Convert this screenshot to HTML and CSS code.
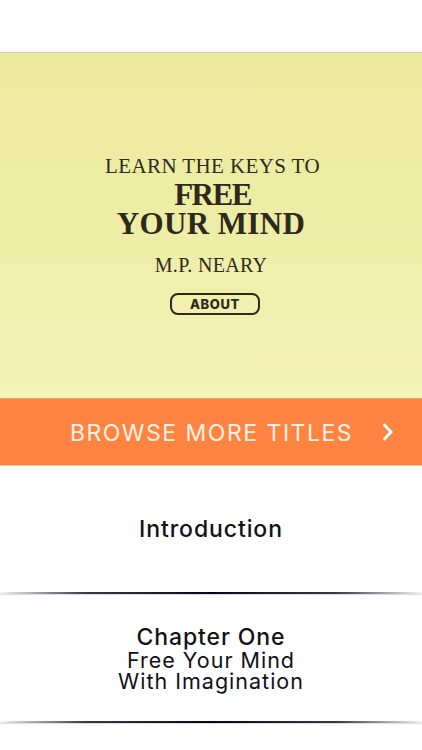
FILE: index.html
```html
<!DOCTYPE html>
<html>
<head>
<meta charset="utf-8">
<link rel="stylesheet" href="styles.css">
</head>
<body>
<div class="page">
  <header class="topbar"></header>
  <section class="hero">
    <div class="line l1">LEARN THE KEYS TO</div>
    <div class="line l2">FREE</div>
    <div class="line l3">YOUR MIND</div>
    <div class="line l4">M.P. NEARY</div>
    <div class="about">ABOUT</div>
  </section>
  <div class="browse">
    <span class="browse-text">BROWSE MORE TITLES</span>
    <svg class="chev" width="12" height="18" viewBox="0 0 12 18"><path d="M2.5 2 L9 9 L2.5 16" fill="none" stroke="#fff" stroke-width="3" stroke-linecap="round" stroke-linejoin="round"/></svg>
  </div>
  <div class="item item1">
    <div class="title">Introduction</div>
  </div>
  <div class="divider"></div>
  <div class="item item2">
    <div class="title">Chapter One</div>
    <div class="sub">Free Your Mind</div>
    <div class="sub">With Imagination</div>
  </div>
  <div class="divider"></div>
</div>
</body>
</html>
```
FILE: styles.css
```css
html, body {
  margin: 0;
  padding: 0;
  background: #ffffff;
}
.page {
  width: 422px;
  height: 750px;
  overflow: hidden;
  display: flex;
  flex-direction: column;
}
.topbar {
  height: 53px;
  background: #ffffff;
  border-bottom: 1px solid #cfcdaa;
  box-sizing: border-box;
}
.hero {
  height: 345px;
  box-sizing: border-box;
  padding-top: 101px;
  background: linear-gradient(to bottom, #ebea9c 0%, #eeeda6 50%, #f4f3b8 100%);
  display: flex;
  flex-direction: column;
  align-items: center;
  font-family: "Liberation Serif", "DejaVu Serif", serif;
  color: #2d2a1c;
}
.line {
  white-space: nowrap;
}
.l1 {
  font-size: 21px;
  line-height: 24px;
  letter-spacing: 0.4px;
  margin-left: 3px;
}
.l2 {
  font-size: 31px;
  line-height: 31px;
  font-weight: bold;
  letter-spacing: -1.5px;
  margin-top: 1px;
  margin-left: 3px;
}
.l3 {
  font-size: 31px;
  line-height: 28px;
  font-weight: bold;
  letter-spacing: 0.4px;
}
.l4 {
  font-size: 20px;
  line-height: 24px;
  margin-top: 15px;
  letter-spacing: 0.3px;
}
.about {
  margin-top: 16px;
  margin-left: 8px;
  width: 90px;
  height: 22px;
  box-sizing: border-box;
  border: 2px solid #2d2a1c;
  border-radius: 8px;
  display: flex;
  align-items: center;
  justify-content: center;
  font-family: "Inter", "DejaVu Sans", sans-serif;
  font-weight: 800;
  font-size: 13px;
  letter-spacing: 0.6px;
  color: #2d2a1c;
}
.browse {
  height: 68px;
  box-sizing: border-box;
  background: #ff8441;
  border-top: 1px solid #f2a06a;
  border-bottom: 1px solid #f9c79e;
  display: flex;
  align-items: center;
  justify-content: flex-end;
  padding-right: 28px;
  gap: 29px;
}
.browse-text {
  font-family: "Inter", "Lato", sans-serif;
  font-size: 23px;
  letter-spacing: 1.5px;
  color: #fdf1e6;
  line-height: 1;
  padding-top: 3px;
}
.chev {
  display: block;
}
.item {
  height: 126px;
  display: flex;
  flex-direction: column;
  align-items: center;
  justify-content: center;
  font-family: "Inter", "Lato", sans-serif;
  color: #111118;
}
.item2 {
  height: 127px;
}
.title {
  font-size: 23px;
  font-weight: 500;
  letter-spacing: 0.9px;
  line-height: 26px;
}
.sub {
  font-size: 21.5px;
  letter-spacing: 1px;
  line-height: 21px;
}
.divider {
  height: 2px;
  background: linear-gradient(to right, rgba(10,10,30,0.05) 0%, #3a3a48 20%, #05051a 50%, #3a3a48 80%, rgba(10,10,30,0.05) 100%);
  box-shadow: 0 1px 1px rgba(150,150,170,0.35);
}
```
